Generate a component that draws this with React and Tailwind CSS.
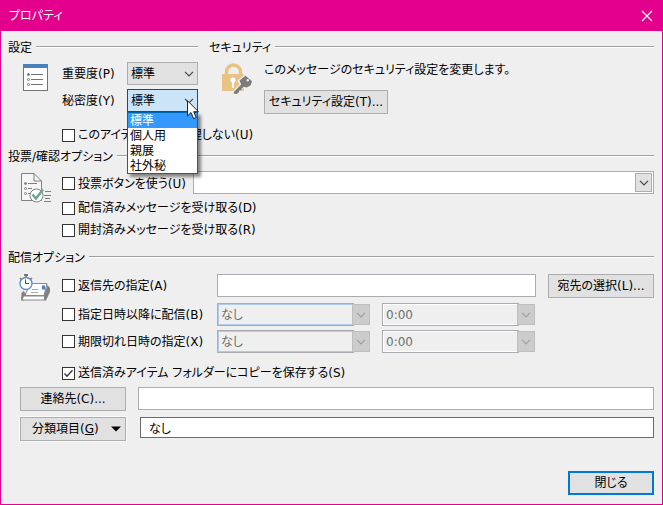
import { useState } from 'react'

const PRIORITIES = ['低', '標準', '高']
const SENSITIVITIES = ['標準', '個人用', '親展', '社外秘']

function Chevron({ className = '' }) {
  return (
    <svg viewBox="0 0 10 6" className={`w-[10px] h-[6px] pointer-events-none ${className}`} fill="none" stroke="currentColor" strokeWidth="1.2">
      <path d="M1 0.8 L5 4.8 L9 0.8" />
    </svg>
  )
}

function GroupTitle({ children }) {
  return (
    <div className="flex items-center h-5 gap-1">
      <h2 className="whitespace-nowrap pt-[2px]">{children}</h2>
      <div className="flex-1 h-[2px] bg-[#a0a0a0] border-b border-white" />
    </div>
  )
}

function Check({ id, label, defaultChecked = false, className = '' }) {
  return (
    <div className={`flex items-center gap-[3px] shrink-0 whitespace-nowrap ${className}`}>
      <span className="relative w-[13px] h-[13px] shrink-0">
        <input
          id={id}
          type="checkbox"
          defaultChecked={defaultChecked}
          className="peer block appearance-none w-[13px] h-[13px] bg-white border border-[#333333]"
        />
        <svg viewBox="0 0 13 13" className="absolute inset-0 hidden peer-checked:block pointer-events-none" fill="none" stroke="#333333" strokeWidth="1.3">
          <path d="M2.5 6.5 L5 9.3 L10.5 3.3" />
        </svg>
      </span>
      <label htmlFor={id}>{label}</label>
    </div>
  )
}

function Button({ children, className = '' }) {
  return (
    <button type="button" className={`h-6 shrink-0 bg-[#e1e1e1] border border-[#adadad] whitespace-nowrap hover:border-[#0078d7] ${className}`}>
      {children}
    </button>
  )
}

function DisabledCombo({ label, value, inner }) {
  return (
    <div className="relative w-[153px] h-[23px] pr-4">
      <select disabled aria-label={label} className={`appearance-none block w-full h-full px-[3px] border border-[#abadb3] bg-[#efefef] text-[#6d6d6d] opacity-100 shadow-[inset_0_0_0_1px] ${inner}`}>
        <option>{value}</option>
      </select>
      <span className="absolute right-0 top-px bottom-px w-[18px] flex items-center justify-center bg-[#cccccc] border border-[#bfbfbf] text-[#a0a0a0]">
        <Chevron />
      </span>
    </div>
  )
}

function ListIcon() {
  return (
    <svg width="26" height="28" viewBox="0 0 26 28" fill="none">
      <rect x="0.5" y="0.5" width="24" height="26" fill="#fff" stroke="#737373" />
      <rect width="25" height="4" fill="#4a80bd" />
      <g stroke="#737373">
        <path d="M8 10.5 H20 M8 15.5 H20 M8 20.5 H20" />
        <circle cx="5.5" cy="10.5" r="1" fill="#737373" />
        <circle cx="5.5" cy="15.5" r="1" />
        <circle cx="5.5" cy="20.5" r="1" />
      </g>
    </svg>
  )
}

function LockIcon() {
  return (
    <svg width="32" height="32" viewBox="0 0 32 32" fill="none">
      <path d="M5.5 12 V9 A7 7 0 0 1 19.5 9 V12" stroke="#e9c384" strokeWidth="3.4" />
      <rect x="1" y="11" width="22" height="17" rx="1" fill="#e9c384" />
      <circle cx="12" cy="17" r="2.6" fill="#fff" />
      <rect x="10.9" y="17" width="2.2" height="8" fill="#fff" />
      <path d="M18 18 L25 12.5 L31 18 L26.5 25 L21.5 24 L16 31 L12.5 29.5 L20 21.5 Z" stroke="#efefef" strokeWidth="2.5" fill="#efefef" />
      <path d="M24.5 12.7 L31 18.2 L29.5 22.5 L25.5 24.5 L22.8 23.8 L20.8 25.6 L20 27.4 L18.3 27.6 L17.6 29.8 L15.2 31 L12.8 30.4 L13 28.8 L20.2 21.5 L18.5 17.5 Z" fill="#7b7b7b" />
      <circle cx="26.8" cy="17.2" r="1.2" fill="#efefef" />
    </svg>
  )
}

function VoteIcon() {
  return (
    <svg width="32" height="32" viewBox="0 0 32 32" fill="none">
      <path d="M0.5 0.5 H13 L20.5 8 V27.5 H0.5 Z" fill="#f6f6f6" stroke="#808080" />
      <path d="M13 0.5 V8 H20.5" stroke="#808080" />
      <g stroke="#808080">
        <circle cx="4.5" cy="10.5" r="1" fill="#808080" />
        <circle cx="4.5" cy="15.5" r="1" />
        <circle cx="4.5" cy="20.5" r="1" />
        <path d="M7 10.5 H16 M7 15.5 H11 M7 20.5 H9" />
      </g>
      <circle cx="15.5" cy="22.5" r="6.5" fill="#fff" stroke="#808080" />
      <path d="M11.5 21.5 L15 25.5 L22 16.5" stroke="#6aa690" strokeWidth="2.4" />
      <path d="M24 18.5 H30 M23 22.5 H30 M24 25.5 H29 M23 28.5 H30" stroke="#808080" />
    </svg>
  )
}

function DeliveryIcon() {
  return (
    <svg width="32" height="28" viewBox="0 0 32 28" fill="none">
      <path d="M11 9.5 H28 L25 21.5 H6 Z" fill="#fff" stroke="#8a8a8a" />
      <path d="M28.5 11 L31 14 V18 L27 26.5 L25 26.5 V21.5 Z" fill="#808080" />
      <path d="M2.5 19 L4.5 17 L7 20 L5 26.5 H2 Z" fill="#808080" />
      <path d="M5 22 H25.5 V26 H3.5" fill="#fff" stroke="#8a8a8a" />
      <rect x="23" y="11.5" width="3" height="4" fill="#4a80bd" />
      <path d="M13 15.5 H19 M12 18.5 H19" stroke="#a8a8a8" />
      <rect x="5" y="0" width="4" height="2" fill="#737373" />
      <path d="M7 2 V4 M1 4 L2.5 5.5 M13 4 L11.5 5.5" stroke="#737373" strokeWidth="1.5" />
      <circle cx="7" cy="9.5" r="6" fill="#fff" stroke="#5b8fc9" strokeWidth="1.4" />
      <path d="M6.5 5.5 V9.5 H10" stroke="#555" />
    </svg>
  )
}

function SensitivitySelect() {
  const [value, setValue] = useState('標準')
  const [open, setOpen] = useState(true)

  const toggle = (e) => {
    e.preventDefault()
    setOpen((v) => !v)
  }

  const pick = (item) => {
    setValue(item)
    setOpen(false)
  }

  return (
    <div className="relative flex-1 h-[23px]">
      <select
        id="sensitivity"
        value={value}
        onMouseDown={toggle}
        onChange={(e) => setValue(e.target.value)}
        className="appearance-none block w-full h-full px-[3px] bg-[#cce4f7] border border-[#005499] focus:outline-none"
      >
        {SENSITIVITIES.map((s) => <option key={s}>{s}</option>)}
      </select>
      <Chevron className="absolute right-1 top-[9px] text-[#444444]" />
      {open && (
        <ul role="listbox" aria-label="秘密度" className="absolute z-10 left-0 right-0 top-[23px] bg-white border border-[#0066b4] shadow-[3px_3px_3px_rgba(0,0,0,0.45)]">
          {SENSITIVITIES.map((s) => (
            <li
              key={s}
              role="option"
              aria-selected={s === value}
              onClick={() => pick(s)}
              className={`h-[15px] leading-4 px-[2px] ${s === value ? 'bg-[#3399ff] text-white' : ''}`}
            >
              {s}
            </li>
          ))}
        </ul>
      )}
      <svg width="13" height="20" viewBox="0 0 13 20" className="absolute z-20 left-[60px] top-[11px] pointer-events-none">
        <path d="M0.5 0.8 V16 L4 12.6 L6.6 18.6 L9.2 17.5 L6.7 11.7 H11.5 Z" fill="#fff" stroke="#222" />
      </svg>
    </div>
  )
}

export default function App() {
  return (
    <div className="min-h-screen flex flex-col bg-[#efefef] border border-[#e3008c] text-black text-[12px] leading-4 font-['DejaVu_Sans','Noto_Sans_CJK_JP',sans-serif] [font-feature-settings:'palt']">
      <header className="h-[30px] shrink-0 flex items-center justify-between pl-2 pr-[9px] bg-[#e3008c] text-white">
        <h1>プロパティ</h1>
        <button type="button" aria-label="閉じる">
          <svg width="12" height="12" viewBox="0 0 12 12" stroke="currentColor" strokeWidth="1.2">
            <path d="M1 1 L11 11 M11 1 L1 11" />
          </svg>
        </button>
      </header>

      <main className="flex-1 flex flex-col pl-[7px] pr-2 pt-1.5 pb-[9px]">
        <div className="flex gap-[11px]">
          <section className="w-[190px] shrink-0">
            <GroupTitle>設定</GroupTitle>
            <div className="flex mt-[5px]">
              <div className="w-[54px] shrink-0 pl-[15px] pt-[2px]"><ListIcon /></div>
              <div className="flex-1 flex flex-col gap-1">
                <div className="flex items-center">
                  <label htmlFor="priority" className="w-[65px]">重要度(P)</label>
                  <div className="relative flex-1 h-[23px]">
                    <select id="priority" defaultValue="標準" className="appearance-none block w-full h-full px-[3px] bg-[#e1e1e1] border border-[#adadad]">
                      {PRIORITIES.map((p) => <option key={p}>{p}</option>)}
                    </select>
                    <Chevron className="absolute right-1 top-[9px] text-[#444444]" />
                  </div>
                </div>
                <div className="flex items-center">
                  <label htmlFor="sensitivity" className="w-[65px]">秘密度(Y)</label>
                  <SensitivitySelect />
                </div>
              </div>
            </div>
          </section>

          <section className="flex-1">
            <GroupTitle>セキュリティ</GroupTitle>
            <div className="flex mt-[3px]">
              <div className="w-[55px] shrink-0 pl-3 pt-[3px]"><LockIcon /></div>
              <div>
                <p className="h-5 leading-5">このメッセージのセキュリティ設定を変更します。</p>
                <Button className="mt-2.5 w-[124px]">セキュリティ設定(T)...</Button>
              </div>
            </div>
          </section>
        </div>
        <Check id="autoarchive" label="このアイテムを自動整理しない(U)" className="h-5 mt-[11px] pl-[54px]" />

        <section className="mt-px">
          <GroupTitle>投票/確認オプション</GroupTitle>
          <div className="flex mt-[5px]">
            <div className="w-[54px] shrink-0 pl-[13px] pt-[2px]"><VoteIcon /></div>
            <div className="flex-1">
              <div className="flex items-center">
                <Check id="vote" label="投票ボタンを使う(U)" className="w-[131px] h-[23px] pt-[2px]" />
                <div className="relative flex-1 h-[23px]">
                  <select aria-label="投票ボタン" className="appearance-none block w-full h-full px-1 bg-white border border-[#abadb3]">
                    <option></option>
                    <option>承認;却下</option>
                    <option>はい;いいえ</option>
                  </select>
                  <span className="absolute right-[2px] top-[2px] bottom-[2px] w-[17px] flex items-center justify-center bg-[#e1e1e1] border border-[#adadad] text-[#444444] pointer-events-none">
                    <Chevron />
                  </span>
                </div>
              </div>
              <Check id="delivery-receipt" label="配信済みメッセージを受け取る(D)" className="h-[22px] mt-[3px]" />
              <Check id="read-receipt" label="開封済みメッセージを受け取る(R)" className="h-[22px]" />
            </div>
          </div>
        </section>

        <section className="mt-1.5">
          <GroupTitle>配信オプション</GroupTitle>
          <div className="flex mt-[7px]">
            <div className="w-[54px] shrink-0 pl-[11px]"><DeliveryIcon /></div>
            <div className="flex-1">
              <div className="flex items-start">
                <Check id="reply-to" label="返信先の指定(A)" className="w-[155px] h-[23px]" />
                <input aria-label="返信先" className="flex-1 min-w-0 h-[23px] px-1 bg-white border border-[#abadb3]" />
                <Button className="ml-3 w-[106px]">宛先の選択(L)...</Button>
              </div>
              <div className="flex items-center mt-[5px]">
                <Check id="not-before" label="指定日時以降に配信(B)" className="w-[155px]" />
                <div className="flex gap-3">
                  <DisabledCombo label="配信日" value="なし" inner="shadow-[#aecbea]" />
                  <DisabledCombo label="配信時刻" value="0:00" inner="shadow-white" />
                </div>
              </div>
              <div className="flex items-center mt-1">
                <Check id="expires" label="期限切れ日時の指定(X)" className="w-[155px]" />
                <div className="flex gap-3">
                  <DisabledCombo label="期限日" value="なし" inner="shadow-[#aecbea]" />
                  <DisabledCombo label="期限時刻" value="0:00" inner="shadow-white" />
                </div>
              </div>
              <Check id="save-copy" defaultChecked label="送信済みアイテム フォルダーにコピーを保存する(S)" className="h-5 mt-2.5" />
            </div>
          </div>

          <div className="flex gap-3 mt-1 pl-3">
            <Button className="w-[106px]">連絡先(C)...</Button>
            <input aria-label="連絡先" className="flex-1 min-w-0 h-[23px] px-1 bg-white border border-[#abadb3]" />
          </div>
          <div className="flex gap-3.5 mt-1.5 pl-3">
            <Button className="w-[106px] flex items-center justify-between pl-[11px] pr-1 shadow-[0_0_0_1px_#fafafa]">
              <span>分類項目(<u>G</u>)</span>
              <svg width="10" height="6" viewBox="0 0 10 6"><path d="M0 0.5 H10 L5 5.5 Z" fill="#000" /></svg>
            </Button>
            <input aria-label="分類項目" defaultValue="なし" className="flex-1 min-w-0 h-[21px] px-2 bg-white border border-[#6b6b6b]" />
          </div>
        </section>

        <footer className="flex justify-end mt-auto pt-4">
          <button type="button" className="w-[86px] h-6 bg-[#e1e1e1] border-2 border-[#0078d7]">閉じる</button>
        </footer>
      </main>
    </div>
  )
}
